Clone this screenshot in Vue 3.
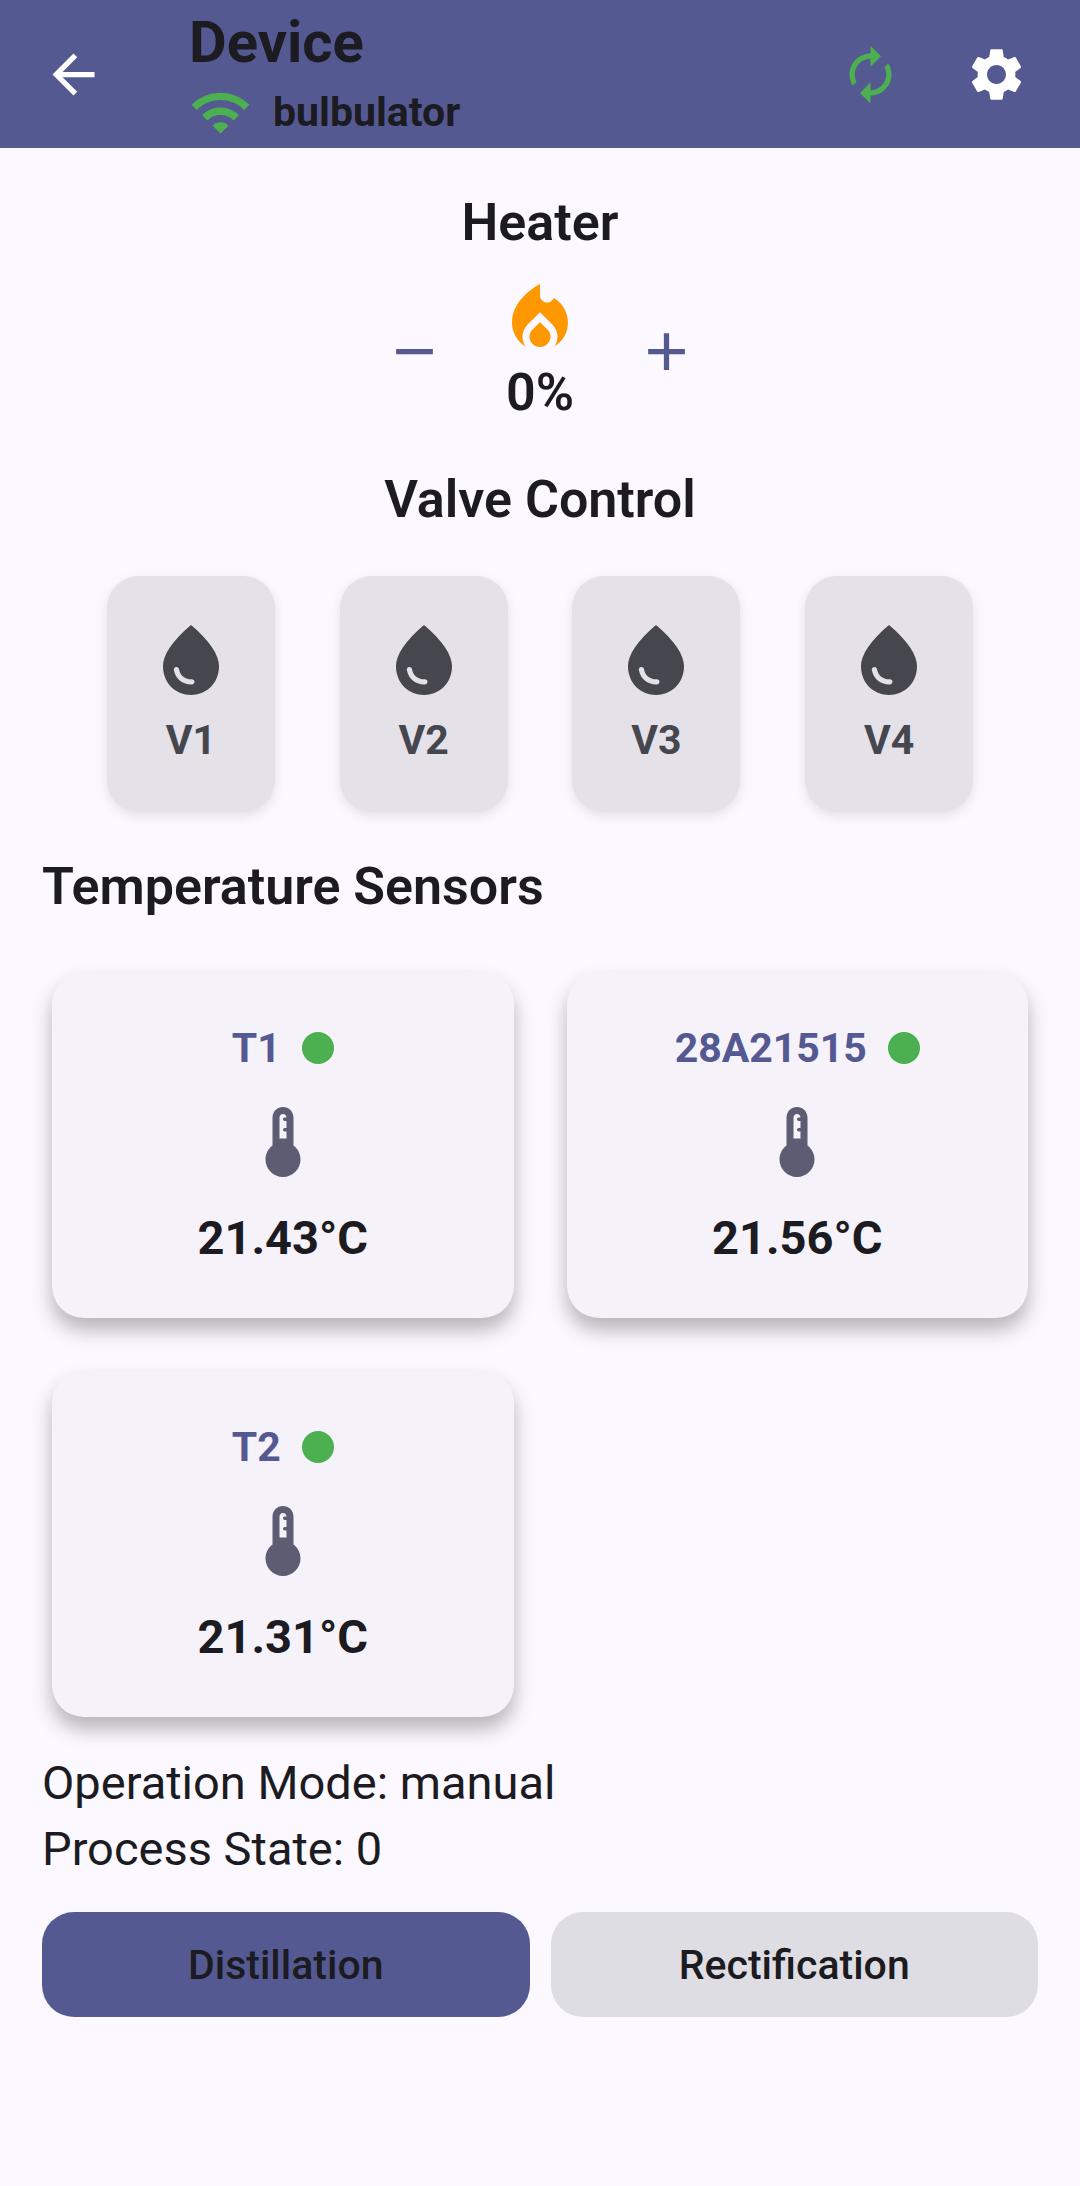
<script setup>
import { ref } from 'vue'

const power = ref(0)
const valves = ref([
  { name: 'V1', open: false },
  { name: 'V2', open: false },
  { name: 'V3', open: false },
  { name: 'V4', open: false },
])
const sensors = [
  { name: 'T1', value: '21.43' },
  { name: '28A21515', value: '21.56' },
  { name: 'T2', value: '21.31' },
]
const processes = ['Distillation', 'Rectification']
const selected = ref('Distillation')

function changePower(step) {
  power.value = Math.min(100, Math.max(0, power.value + step))
}
</script>

<template>
  <div class="page">
    <header class="app-bar">
      <button class="icon-button" type="button" aria-label="Back">
        <svg class="icon" viewBox="0 0 24 24"><path d="M20 11H7.830l5.590-5.590L12 4l-8 8 8 8 1.410-1.410L7.830 13H20v-2z" /></svg>
      </button>
      <div class="heading">
        <h1 class="title">Device</h1>
        <div class="network">
          <svg class="icon green" viewBox="0 0 24 24" aria-hidden="true"><path d="M1 9l2 2c4.970-4.970 13.030-4.970 18 0l2-2C16.930 2.930 7.080 2.930 1 9zm8 8l3 3 3-3c-1.650-1.660-4.340-1.660-6 0zm-4-4l2 2c2.760-2.760 7.240-2.760 10 0l2-2C15.140 9.140 8.870 9.140 5 13z" /></svg>
          <span>bulbulator</span>
        </div>
      </div>
      <button class="icon-button green" type="button" aria-label="Refresh">
        <svg class="icon" viewBox="0 0 24 24"><path d="M12 6v3l4-4-4-4v3c-4.420 0-8 3.580-8 8 0 1.570.460 3.030 1.240 4.260L6.700 14.800c-.450-.830-.700-1.790-.700-2.800 0-3.310 2.690-6 6-6zm6.760 1.740L17.300 9.200c.440.840.700 1.790.700 2.800 0 3.310-2.690 6-6 6v-3l-4 4 4 4v-3c4.420 0 8-3.580 8-8 0-1.570-.460-3.030-1.240-4.260z" /></svg>
      </button>
      <button class="icon-button" type="button" aria-label="Settings">
        <svg class="icon" viewBox="0 0 24 24"><path d="M19.140 12.940c.040-.300.060-.610.060-.940 0-.320-.020-.640-.070-.940l2.030-1.580c.180-.140.230-.410.120-.610l-1.920-3.320c-.120-.220-.370-.290-.590-.220l-2.390.960c-.500-.380-1.030-.700-1.620-.940l-.360-2.540c-.040-.240-.240-.410-.480-.410h-3.840c-.240 0-.430.170-.470.410l-.360 2.540c-.590.240-1.130.570-1.620.940l-2.390-.960c-.220-.080-.470 0-.590.220L2.740 8.870c-.120.210-.080.470.120.610l2.030 1.580c-.050.300-.090.630-.090.940s.020.640.070.940l-2.030 1.580c-.180.140-.230.410-.120.610l1.920 3.320c.120.220.370.290.590.220l2.390-.960c.500.380 1.030.700 1.620.940l.360 2.540c.050.240.240.410.480.410h3.840c.240 0 .440-.170.470-.410l.360-2.540c.590-.240 1.130-.560 1.620-.940l2.390.960c.220.080.470 0 .590-.220l1.920-3.320c.120-.220.070-.470-.120-.610l-2.010-1.580zM12 15.600c-1.980 0-3.600-1.620-3.600-3.600s1.620-3.600 3.600-3.600 3.600 1.620 3.600 3.600-1.620 3.600-3.600 3.600z" /></svg>
      </button>
    </header>

    <main class="content">
      <section class="heater">
        <h2 class="section-title centered">Heater</h2>
        <div class="heater-row">
          <button class="icon-button accent" type="button" aria-label="Decrease power" @click="changePower(-1)">
            <svg class="icon" viewBox="0 0 24 24"><path d="M19 13H5v-2h14v2z" /></svg>
          </button>
          <div class="heater-level">
            <svg class="icon-large" viewBox="0 0 24 24" aria-hidden="true"><path d="M16 6l-.440.550C14.380 8.020 12 7.190 12 5.300V2c0 0-8 4-8 11 0 2.920 1.560 5.470 3.890 6.860C7.330 19.070 7 18.100 7 17.060c0-1.320.520-2.560 1.470-3.500L12 10.100l3.530 3.470c.950.930 1.470 2.170 1.470 3.500 0 1.020-.310 1.960-.850 2.750 1.890-1.150 3.290-3.060 3.710-5.300C20.520 10.970 18.790 7.620 16 6zM12 12.900l-2.130 2.090C9.310 15.550 9 16.280 9 17.060 9 18.680 10.350 20 12 20s3-1.320 3-2.940c0-.780-.310-1.520-.870-2.070L12 12.900z" /></svg>
            <output class="level">{{ power }}%</output>
          </div>
          <button class="icon-button accent" type="button" aria-label="Increase power" @click="changePower(1)">
            <svg class="icon" viewBox="0 0 24 24"><path d="M19 13h-6v6h-2v-6H5v-2h6V5h2v6h6v2z" /></svg>
          </button>
        </div>
      </section>

      <section class="valves">
        <h2 class="section-title centered">Valve Control</h2>
        <div class="valve-row">
          <button
            v-for="valve in valves"
            :key="valve.name"
            class="valve"
            type="button"
            :aria-pressed="valve.open"
            @click="valve.open = !valve.open"
          >
            <svg class="icon-large" viewBox="0 0 24 24" aria-hidden="true"><path d="M12 2c-5.330 4.550-8 8.480-8 11.800 0 4.980 3.800 8.200 8 8.200s8-3.220 8-8.200C20 10.480 17.330 6.550 12 2zM7.830 14c.370 0 .670.260.740.620.410 2.220 2.280 2.980 3.640 2.870.430-.020.790.320.790.750 0 .400-.320.730-.720.750-2.130.130-4.620-1.090-5.190-4.120C7.010 14.420 7.370 14 7.830 14z" /></svg>
            <span>{{ valve.name }}</span>
          </button>
        </div>
      </section>

      <section class="sensors">
        <h2 class="section-title">Temperature Sensors</h2>
        <div class="sensor-grid">
          <article v-for="sensor in sensors" :key="sensor.name" class="sensor">
            <h3 class="sensor-name">{{ sensor.name }}<span class="dot"></span></h3>
            <svg class="icon-large" viewBox="0 0 24 24" aria-hidden="true"><path d="M15 13V5c0-1.660-1.340-3-3-3S9 3.340 9 5v8c-1.210.910-2 2.370-2 4 0 2.760 2.240 5 5 5s5-2.240 5-5c0-1.630-.790-3.090-2-4zM11 5c0-.550.450-1 1-1s1 .450 1 1h-.500c-.280 0-.500.220-.500.500s.220.500.500.500h.500v2h-.500c-.280 0-.500.220-.500.500s.220.500.500.500h.500v2h-2V5z" /></svg>
            <p class="reading">{{ sensor.value }}°C</p>
          </article>
        </div>
      </section>

      <section class="status">
        <p>Operation Mode: manual</p>
        <p>Process State: 0</p>
      </section>

      <div class="process-row">
        <button
          v-for="process in processes"
          :key="process"
          class="process"
          :class="{ active: selected === process }"
          type="button"
          :aria-pressed="selected === process"
          @click="selected = process"
        >
          {{ process }}
        </button>
      </div>
    </main>
  </div>
</template>

<style>
body {
  margin: 0;
  background: #fbf8ff;
}
</style>

<style scoped>
.page {
  min-height: 100vh;
  background: #fbf8ff;
  color: #1b1b21;
  font-family: Roboto, 'Liberation Sans', sans-serif;
}

h1, h2, h3, p {
  margin: 0;
}

button {
  margin: 0;
  padding: 0;
  border: 0;
  background: none;
  color: inherit;
  font: inherit;
  cursor: pointer;
}

svg {
  display: block;
  fill: currentColor;
}

.icon {
  width: 63px;
  height: 63px;
}

.icon-large {
  width: 84px;
  height: 84px;
}

.green {
  color: #4caf50;
}

.app-bar {
  display: flex;
  align-items: center;
  height: 148px;
  padding: 0 21px 0 10px;
  background: #555992;
}

.icon-button {
  display: flex;
  flex: none;
  align-items: center;
  justify-content: center;
  width: 126px;
  height: 126px;
}

.app-bar .icon-button:not(.green) {
  color: #fff;
}

.heading {
  flex: 1;
  padding-left: 53px;
}

.title {
  font-size: 58px;
  font-weight: 700;
  line-height: 76px;
}

.network {
  display: flex;
  align-items: center;
  gap: 21px;
  font-size: 41px;
  font-weight: 700;
  line-height: 64px;
}

.content {
  padding: 43px 42px;
}

.section-title {
  font-size: 52px;
  font-weight: 600;
  line-height: 64px;
}

.centered {
  text-align: center;
}

.heater-row {
  display: flex;
  align-items: center;
  justify-content: center;
  margin-top: 22px;
}

.accent {
  color: #555992;
}

.heater-level {
  display: flex;
  flex-direction: column;
  align-items: center;
  min-width: 126px;
}

.heater-level svg {
  color: #ff9800;
}

.level {
  font-size: 52px;
  font-weight: 600;
  line-height: 64px;
}

.valves {
  margin-top: 43px;
}

.valve-row {
  display: flex;
  justify-content: space-evenly;
  margin-top: 44px;
}

.valve {
  display: flex;
  flex-direction: column;
  align-items: center;
  gap: 8px;
  width: 168px;
  padding: 42px 0;
  border-radius: 32px;
  background: #e4e1e9;
  box-shadow: 0 4px 12px rgba(0, 0, 0, 0.1);
  color: #46464f;
  font-size: 41px;
  font-weight: 700;
  line-height: 60px;
}

.sensors {
  margin-top: 43px;
}

.sensor-grid {
  display: grid;
  grid-template-columns: 1fr 1fr;
  gap: 53px;
  margin-top: 53px;
  padding: 0 10px;
}

.sensor {
  display: flex;
  flex-direction: column;
  align-items: center;
  gap: 20px;
  padding: 44px 0 46px;
  border-radius: 32px;
  background: #f5f2fa;
  box-shadow: 0 12px 20px rgba(0, 0, 0, 0.28);
}

.sensor svg {
  color: #5c5d72;
}

.sensor-name {
  display: flex;
  align-items: center;
  gap: 21px;
  color: #555992;
  font-size: 41px;
  font-weight: 700;
  line-height: 64px;
}

.dot {
  width: 32px;
  height: 32px;
  border-radius: 50%;
  background: #4caf50;
}

.reading {
  font-size: 47px;
  font-weight: 700;
  line-height: 68px;
}

.status {
  margin-top: 33px;
  font-size: 47px;
  line-height: 66px;
}

.process-row {
  display: flex;
  gap: 21px;
  margin-top: 30px;
}

.process {
  flex: 1;
  height: 105px;
  border-radius: 32px;
  background: #dedde3;
  font-size: 41px;
  font-weight: 500;
}

.process.active {
  background: #555992;
}
</style>
